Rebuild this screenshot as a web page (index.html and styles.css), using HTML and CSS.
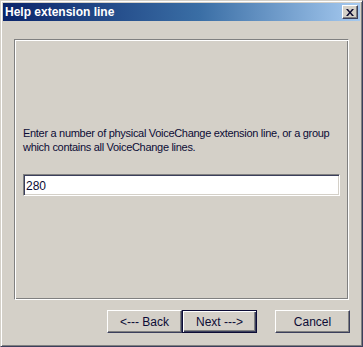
FILE: index.html
```html
<!DOCTYPE html>
<html lang="en">
<head>
  <meta charset="UTF-8" />
  <title>Help extension line</title>
  <link rel="stylesheet" href="styles.css">
</head>
<body>
  <div class="window">
    <div class="titlebar">
      <span class="title">Help extension line</span>
      <button class="close" aria-label="Close">
        <svg width="8" height="7" viewBox="0 0 8 7">
          <path d="M0 0h2l2 2.5L6 0h2L5 3.5 8 7H6L4 4.5 2 7H0l3-3.5z" fill="#0a0a30"/>
        </svg>
      </button>
    </div>
    <div class="content">
      <div class="panel">
        <p class="hint">Enter a number of physical VoiceChange extension line, or a group which contains all VoiceChange lines.</p>
        <input class="field" type="text" value="280">
      </div>
      <div class="actions">
        <button class="btn">&lt;--- Back</button>
        <button class="btn default">Next ---&gt;</button>
        <button class="btn cancel">Cancel</button>
      </div>
    </div>
  </div>
</body>
</html>
```

FILE: styles.css
```css
body { margin: 0; background: #d4d0c8; font-family: "Liberation Sans", Arial, sans-serif; font-size: 11px; color: #0c0c36; }
.window { width: 363px; height: 347px; box-sizing: border-box; background: #d4d0c8; border: 1px solid; border-color: #d4d0c8 #3b3f5c #3b3f5c #d4d0c8; box-shadow: inset 1px 1px #fff, inset -1px -1px #808080; padding: 2px; display: flex; flex-direction: column; }
.titlebar { height: 18px; display: flex; align-items: center; justify-content: space-between; padding: 0 2px; background: linear-gradient(to right, #0a246a, #3a6ea5 55%, #a6caf0); }
.title { color: #fff; font-weight: bold; font-size: 12px; }
.close { width: 16px; height: 14px; padding: 0; display: flex; align-items: center; justify-content: center; background: #d4d0c8; border: 1px solid; border-color: #fff #3b3f5c #3b3f5c #fff; box-shadow: inset -1px -1px #808080; }
.content { flex: 1; padding: 18px 10px 0 11px; }
.panel { width: 335px; height: 261px; box-sizing: border-box; border: 1px solid; border-color: #808080 #fff #fff #808080; box-shadow: inset 1px 1px #fff, inset -1px -1px #808080; padding: 86px 2px 0 8px; }
.hint { margin: 0; line-height: 14px; letter-spacing: -0.3px; }
.field { display: block; margin-top: 20px; width: 317px; height: 22px; box-sizing: border-box; padding: 1px 2px 0; font: inherit; font-size: 12px; color: #0c0c36; background: #fff; border: 1px solid; border-color: #808080 #fff #fff #808080; box-shadow: inset 1px 1px #3b3f5c, inset -1px -1px #d4d0c8; outline: none; }
.actions { display: flex; justify-content: flex-end; margin-top: 10px; }
.btn { width: 75px; height: 23px; padding: 0; font: inherit; font-size: 12px; color: #0c0c36; background: #d4d0c8; border: 1px solid; border-color: #fff #3b3f5c #3b3f5c #fff; box-shadow: inset -1px -1px #808080; }
.btn.default { border: 1px solid #0c0c36; box-shadow: inset 1px 1px #fff, inset -1px -1px #3b3f5c, inset -2px -2px #808080; }
.btn.cancel { margin-left: 18px; }
```
